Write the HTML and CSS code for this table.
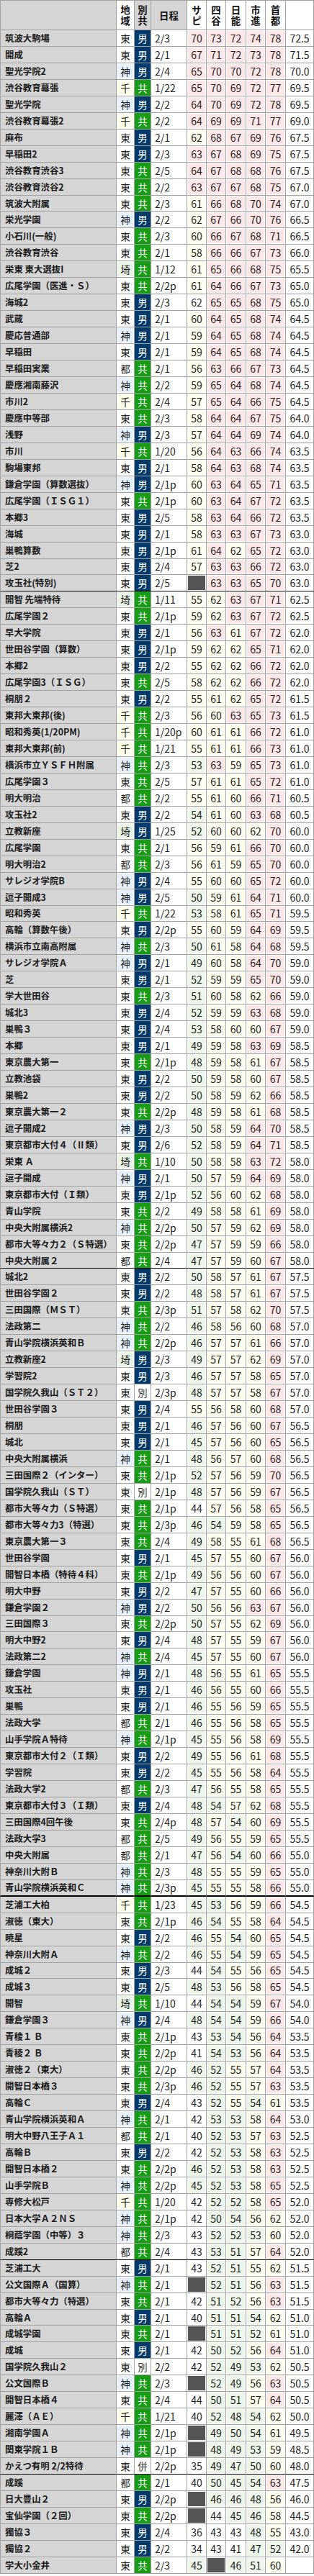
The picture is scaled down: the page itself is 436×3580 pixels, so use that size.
FILE: index.html
```html
<!DOCTYPE html>
<html lang="ja">
<head>
<meta charset="utf-8">
<title>偏差値一覧</title>
<link rel="stylesheet" href="styles.css">
</head>
<body>
<table class="rank">
<colgroup>
<col class="c-nm"><col class="c-r"><col class="c-g"><col class="c-d"><col class="c-s"><col class="c-s"><col class="c-s2"><col class="c-s"><col class="c-s2"><col class="c-av">
</colgroup>
<thead>
<tr>
<th class="hg"></th><th>地<br>域</th><th class="hg">別<br>共</th><th class="hg">日程</th><th>サ<br>ピ</th><th>四<br>谷</th><th>日<br>能</th><th>市<br>進</th><th>首<br>都</th><th></th>
</tr>
</thead>
<tbody>
<tr><td class="nm">筑波大駒場</td><td class="r">東</td><td class="m">男</td><td class="d">2/3</td><td class="p">70</td><td class="p">73</td><td class="p">72</td><td class="p">74</td><td class="p">78</td><td>72.5</td></tr>
<tr><td class="nm">開成</td><td class="r">東</td><td class="m">男</td><td class="d">2/1</td><td class="p">67</td><td class="p">71</td><td class="p">72</td><td class="p">73</td><td class="p">78</td><td>71.5</td></tr>
<tr><td class="nm">聖光学院2</td><td class="r kn">神</td><td class="m">男</td><td class="d">2/4</td><td class="p">65</td><td class="p">70</td><td class="p">70</td><td class="p">72</td><td class="p">78</td><td>70.0</td></tr>
<tr><td class="nm">渋谷教育幕張</td><td class="r cb">千</td><td class="k">共</td><td class="d">1/22</td><td class="p">65</td><td class="p">70</td><td class="p">69</td><td class="p">72</td><td class="p">77</td><td>69.5</td></tr>
<tr><td class="nm">聖光学院</td><td class="r kn">神</td><td class="m">男</td><td class="d">2/2</td><td class="p">64</td><td class="p">70</td><td class="p">69</td><td class="p">72</td><td class="p">78</td><td>69.5</td></tr>
<tr><td class="nm">渋谷教育幕張2</td><td class="r cb">千</td><td class="k">共</td><td class="d">2/2</td><td class="p">64</td><td class="p">69</td><td class="p">69</td><td class="p">71</td><td class="p">77</td><td>69.0</td></tr>
<tr><td class="nm">麻布</td><td class="r">東</td><td class="m">男</td><td class="d">2/1</td><td class="y">62</td><td class="p">68</td><td class="p">67</td><td class="p">69</td><td class="p">76</td><td>67.5</td></tr>
<tr><td class="nm">早稲田2</td><td class="r">東</td><td class="m">男</td><td class="d">2/3</td><td class="p">63</td><td class="p">67</td><td class="p">68</td><td class="p">69</td><td class="p">75</td><td>67.5</td></tr>
<tr><td class="nm">渋谷教育渋谷3</td><td class="r">東</td><td class="k">共</td><td class="d">2/5</td><td class="p">64</td><td class="p">67</td><td class="p">68</td><td class="p">68</td><td class="p">76</td><td>67.5</td></tr>
<tr><td class="nm">渋谷教育渋谷2</td><td class="r">東</td><td class="k">共</td><td class="d">2/2</td><td class="p">63</td><td class="p">67</td><td class="p">67</td><td class="p">68</td><td class="p">75</td><td>67.0</td></tr>
<tr><td class="nm">筑波大附属</td><td class="r">東</td><td class="k">共</td><td class="d">2/3</td><td class="y">61</td><td class="p">66</td><td class="p">68</td><td class="p">70</td><td class="p">74</td><td>67.0</td></tr>
<tr><td class="nm">栄光学園</td><td class="r kn">神</td><td class="m">男</td><td class="d">2/2</td><td class="y">62</td><td class="p">67</td><td class="p">66</td><td class="p">70</td><td class="p">76</td><td>66.5</td></tr>
<tr><td class="nm">小石川(一般)</td><td class="r">東</td><td class="k">共</td><td class="d">2/3</td><td class="y">60</td><td class="p">66</td><td class="p">67</td><td class="p">68</td><td class="p">71</td><td>66.5</td></tr>
<tr><td class="nm">渋谷教育渋谷</td><td class="r">東</td><td class="k">共</td><td class="d">2/1</td><td class="y">58</td><td class="p">66</td><td class="p">66</td><td class="p">67</td><td class="p">73</td><td>66.0</td></tr>
<tr><td class="nm">栄東 東大選抜I</td><td class="r st">埼</td><td class="k">共</td><td class="d">1/12</td><td class="y">61</td><td class="p">65</td><td class="p">66</td><td class="p">68</td><td class="p">75</td><td>65.5</td></tr>
<tr><td class="nm">広尾学園（医進・Ｓ）</td><td class="r">東</td><td class="k">共</td><td class="d">2/2p</td><td class="y">61</td><td class="p">64</td><td class="p">66</td><td class="p">67</td><td class="p">73</td><td>65.0</td></tr>
<tr><td class="nm">海城2</td><td class="r">東</td><td class="m">男</td><td class="d">2/3</td><td>62</td><td class="p">65</td><td class="p">65</td><td class="p">68</td><td class="p">75</td><td>65.0</td></tr>
<tr><td class="nm">武蔵</td><td class="r">東</td><td class="m">男</td><td class="d">2/1</td><td class="y">60</td><td class="p">64</td><td class="p">65</td><td class="p">68</td><td class="p">74</td><td>64.5</td></tr>
<tr><td class="nm">慶応普通部</td><td class="r kn">神</td><td class="m">男</td><td class="d">2/1</td><td class="y">59</td><td class="p">64</td><td class="p">65</td><td class="p">68</td><td class="p">74</td><td>64.5</td></tr>
<tr><td class="nm">早稲田</td><td class="r">東</td><td class="m">男</td><td class="d">2/1</td><td class="y">59</td><td class="p">64</td><td class="p">65</td><td class="p">68</td><td class="p">74</td><td>64.5</td></tr>
<tr><td class="nm">早稲田実業</td><td class="r">都</td><td class="k">共</td><td class="d">2/1</td><td class="y">56</td><td class="p">63</td><td class="p">66</td><td class="p">67</td><td class="p">73</td><td>64.5</td></tr>
<tr><td class="nm">慶應湘南藤沢</td><td class="r kn">神</td><td class="k">共</td><td class="d">2/2</td><td class="y">59</td><td class="p">65</td><td class="p">64</td><td class="p">68</td><td class="p">74</td><td>64.5</td></tr>
<tr><td class="nm">市川2</td><td class="r cb">千</td><td class="k">共</td><td class="d">2/4</td><td class="y">57</td><td class="p">65</td><td class="p">64</td><td class="p">66</td><td class="p">75</td><td>64.5</td></tr>
<tr><td class="nm">慶應中等部</td><td class="r">東</td><td class="k">共</td><td class="d">2/3</td><td class="y">58</td><td class="p">64</td><td class="p">64</td><td class="p">67</td><td class="p">75</td><td>64.0</td></tr>
<tr><td class="nm">浅野</td><td class="r kn">神</td><td class="m">男</td><td class="d">2/3</td><td class="y">57</td><td class="p">64</td><td class="p">64</td><td class="p">69</td><td class="p">74</td><td>64.0</td></tr>
<tr><td class="nm">市川</td><td class="r cb">千</td><td class="k">共</td><td class="d">1/20</td><td class="y">56</td><td class="p">64</td><td class="p">63</td><td class="p">66</td><td class="p">74</td><td>63.5</td></tr>
<tr><td class="nm">駒場東邦</td><td class="r">東</td><td class="m">男</td><td class="d">2/1</td><td class="y">58</td><td class="p">64</td><td class="p">63</td><td class="p">68</td><td class="p">74</td><td>63.5</td></tr>
<tr><td class="nm">鎌倉学園（算数選抜）</td><td class="r kn">神</td><td class="m">男</td><td class="d">2/1p</td><td class="y">60</td><td class="p">63</td><td class="p">64</td><td class="p">65</td><td class="p">71</td><td>63.5</td></tr>
<tr><td class="nm">広尾学園（ＩＳＧ１）</td><td class="r">東</td><td class="k">共</td><td class="d">2/1p</td><td class="y">60</td><td class="p">63</td><td class="p">64</td><td class="p">67</td><td class="p">72</td><td>63.5</td></tr>
<tr><td class="nm">本郷3</td><td class="r">東</td><td class="m">男</td><td class="d">2/5</td><td class="y">58</td><td class="p">63</td><td class="p">64</td><td class="p">66</td><td class="p">72</td><td>63.5</td></tr>
<tr><td class="nm">海城</td><td class="r">東</td><td class="m">男</td><td class="d">2/1</td><td class="y">58</td><td class="p">63</td><td class="p">63</td><td class="p">67</td><td class="p">73</td><td>63.0</td></tr>
<tr><td class="nm">巣鴨算数</td><td class="r">東</td><td class="m">男</td><td class="d">2/1p</td><td class="y">61</td><td class="p">64</td><td class="y">62</td><td class="p">65</td><td class="p">72</td><td>63.0</td></tr>
<tr><td class="nm">芝2</td><td class="r">東</td><td class="m">男</td><td class="d">2/4</td><td class="y">57</td><td class="p">63</td><td class="p">63</td><td class="p">66</td><td class="p">72</td><td>63.0</td></tr>
<tr class="sep"><td class="nm">攻玉社(特別)</td><td class="r">東</td><td class="m">男</td><td class="d">2/5</td><td class="x"></td><td class="p">63</td><td class="p">63</td><td class="p">65</td><td class="p">70</td><td>63.0</td></tr>
<tr><td class="nm">開智 先端特待</td><td class="r st">埼</td><td class="k">共</td><td class="d">1/11</td><td class="y">55</td><td class="y">62</td><td class="p">63</td><td class="p">67</td><td class="p">71</td><td>62.5</td></tr>
<tr><td class="nm">広尾学園２</td><td class="r">東</td><td class="k">共</td><td class="d">2/1p</td><td class="y">59</td><td class="y">62</td><td class="p">63</td><td class="p">67</td><td class="p">72</td><td>62.5</td></tr>
<tr><td class="nm">早大学院</td><td class="r">東</td><td class="m">男</td><td class="d">2/1</td><td class="y">56</td><td class="p">63</td><td class="y">61</td><td class="p">67</td><td class="p">72</td><td>62.0</td></tr>
<tr><td class="nm">世田谷学園（算数）</td><td class="r">東</td><td class="m">男</td><td class="d">2/1p</td><td class="y">59</td><td class="y">62</td><td class="y">62</td><td class="p">65</td><td class="p">71</td><td>62.0</td></tr>
<tr><td class="nm">本郷2</td><td class="r">東</td><td class="m">男</td><td class="d">2/2</td><td class="y">55</td><td class="y">62</td><td class="y">62</td><td class="p">66</td><td class="p">72</td><td>62.0</td></tr>
<tr><td class="nm">広尾学園3（ＩＳＧ）</td><td class="r">東</td><td class="k">共</td><td class="d">2/5</td><td class="y">58</td><td class="y">62</td><td class="y">62</td><td class="p">66</td><td class="p">72</td><td>62.0</td></tr>
<tr><td class="nm">桐朋２</td><td class="r">東</td><td class="m">男</td><td class="d">2/2</td><td class="y">55</td><td class="y">61</td><td class="y">62</td><td class="p">65</td><td class="p">72</td><td>61.5</td></tr>
<tr><td class="nm">東邦大東邦(後)</td><td class="r cb">千</td><td class="k">共</td><td class="d">2/3</td><td class="y">56</td><td class="y">60</td><td class="p">63</td><td class="p">65</td><td class="p">73</td><td>61.5</td></tr>
<tr><td class="nm">昭和秀英(1/20PM)</td><td class="r cb">千</td><td class="k">共</td><td class="d">1/20p</td><td class="y">60</td><td class="y">61</td><td class="y">61</td><td class="p">66</td><td class="p">72</td><td>61.0</td></tr>
<tr><td class="nm">東邦大東邦(前)</td><td class="r cb">千</td><td class="k">共</td><td class="d">1/21</td><td class="y">55</td><td class="y">61</td><td class="y">61</td><td class="p">66</td><td class="p">73</td><td>61.0</td></tr>
<tr><td class="nm">横浜市立ＹＳＦＨ附属</td><td class="r kn">神</td><td class="k">共</td><td class="d">2/3</td><td class="g">53</td><td class="p">63</td><td class="y">59</td><td class="p">65</td><td class="p">73</td><td>61.0</td></tr>
<tr><td class="nm">広尾学園３</td><td class="r">東</td><td class="k">共</td><td class="d">2/5</td><td class="y">57</td><td class="y">61</td><td class="y">61</td><td class="p">65</td><td class="p">72</td><td>61.0</td></tr>
<tr><td class="nm">明大明治</td><td class="r">都</td><td class="k">共</td><td class="d">2/2</td><td class="y">55</td><td class="y">61</td><td class="y">60</td><td class="p">66</td><td class="p">71</td><td>60.5</td></tr>
<tr><td class="nm">攻玉社2</td><td class="r">東</td><td class="m">男</td><td class="d">2/2</td><td class="g">54</td><td class="y">61</td><td class="y">60</td><td class="p">63</td><td class="p">68</td><td>60.5</td></tr>
<tr><td class="nm">立教新座</td><td class="r st">埼</td><td class="m">男</td><td class="d">1/25</td><td class="g">52</td><td class="y">60</td><td class="y">60</td><td class="y">62</td><td class="p">70</td><td>60.0</td></tr>
<tr><td class="nm">広尾学園</td><td class="r">東</td><td class="k">共</td><td class="d">2/1</td><td class="y">56</td><td class="y">59</td><td class="y">61</td><td class="p">66</td><td class="p">70</td><td>60.0</td></tr>
<tr><td class="nm">明大明治2</td><td class="r">都</td><td class="k">共</td><td class="d">2/3</td><td class="y">56</td><td class="y">61</td><td class="y">59</td><td class="p">65</td><td class="p">70</td><td>60.0</td></tr>
<tr><td class="nm">サレジオ学院B</td><td class="r kn">神</td><td class="m">男</td><td class="d">2/4</td><td class="y">55</td><td class="y">60</td><td class="y">60</td><td class="p">65</td><td class="p">72</td><td>60.0</td></tr>
<tr><td class="nm">逗子開成3</td><td class="r kn">神</td><td class="m">男</td><td class="d">2/5</td><td class="g">50</td><td class="y">59</td><td class="y">61</td><td class="p">64</td><td class="p">71</td><td>60.0</td></tr>
<tr><td class="nm">昭和秀英</td><td class="r cb">千</td><td class="k">共</td><td class="d">1/22</td><td class="g">53</td><td class="y">58</td><td class="y">61</td><td class="p">65</td><td class="p">71</td><td>59.5</td></tr>
<tr><td class="nm">高輪（算数午後）</td><td class="r">東</td><td class="m">男</td><td class="d">2/2p</td><td class="y">55</td><td class="y">60</td><td class="y">59</td><td class="p">64</td><td class="p">69</td><td>59.5</td></tr>
<tr><td class="nm">横浜市立南高附属</td><td class="r kn">神</td><td class="k">共</td><td class="d">2/3</td><td class="g">50</td><td class="y">61</td><td class="y">58</td><td class="p">64</td><td class="p">68</td><td>59.5</td></tr>
<tr><td class="nm">サレジオ学院Ａ</td><td class="r kn">神</td><td class="m">男</td><td class="d">2/1</td><td class="g">49</td><td class="y">60</td><td class="y">58</td><td class="p">64</td><td class="p">70</td><td>59.0</td></tr>
<tr><td class="nm">芝</td><td class="r">東</td><td class="m">男</td><td class="d">2/1</td><td class="g">52</td><td class="y">59</td><td class="y">59</td><td class="p">65</td><td class="p">70</td><td>59.0</td></tr>
<tr><td class="nm">学大世田谷</td><td class="r">東</td><td class="k">共</td><td class="d">2/3</td><td class="g">51</td><td class="y">60</td><td class="y">58</td><td class="y">62</td><td class="p">66</td><td>59.0</td></tr>
<tr><td class="nm">城北3</td><td class="r">東</td><td class="m">男</td><td class="d">2/4</td><td class="g">52</td><td class="y">59</td><td class="y">59</td><td class="p">63</td><td class="p">68</td><td>59.0</td></tr>
<tr><td class="nm">巣鴨３</td><td class="r">東</td><td class="m">男</td><td class="d">2/4</td><td class="g">53</td><td class="y">58</td><td class="y">60</td><td class="y">60</td><td class="p">67</td><td>59.0</td></tr>
<tr><td class="nm">本郷</td><td class="r">東</td><td class="m">男</td><td class="d">2/1</td><td class="g">49</td><td class="y">59</td><td class="y">58</td><td class="p">63</td><td class="p">69</td><td>58.5</td></tr>
<tr><td class="nm">東京農大第一</td><td class="r">東</td><td class="k">共</td><td class="d">2/1p</td><td class="g">48</td><td class="y">59</td><td class="y">58</td><td class="y">61</td><td class="p">67</td><td>58.5</td></tr>
<tr><td class="nm">立教池袋</td><td class="r">東</td><td class="m">男</td><td class="d">2/2</td><td class="g">50</td><td class="y">59</td><td class="y">58</td><td class="y">60</td><td class="p">67</td><td>58.5</td></tr>
<tr><td class="nm">巣鴨2</td><td class="r">東</td><td class="m">男</td><td class="d">2/2</td><td class="g">50</td><td class="y">58</td><td class="y">59</td><td class="y">62</td><td class="p">66</td><td>58.5</td></tr>
<tr><td class="nm">東京農大第一２</td><td class="r">東</td><td class="k">共</td><td class="d">2/2p</td><td class="g">48</td><td class="y">59</td><td class="y">58</td><td class="y">61</td><td class="p">68</td><td>58.5</td></tr>
<tr><td class="nm">逗子開成2</td><td class="r kn">神</td><td class="m">男</td><td class="d">2/3</td><td class="g">50</td><td class="y">58</td><td class="y">59</td><td class="p">64</td><td class="p">70</td><td>58.5</td></tr>
<tr><td class="nm">東京都市大付４（Ⅱ類）</td><td class="r">東</td><td class="m">男</td><td class="d">2/6</td><td class="g">52</td><td class="y">58</td><td class="y">59</td><td class="p">64</td><td class="p">71</td><td>58.5</td></tr>
<tr><td class="nm">栄東 Ａ</td><td class="r st">埼</td><td class="k">共</td><td class="d">1/10</td><td class="g">50</td><td class="y">58</td><td class="y">58</td><td class="p">63</td><td class="p">72</td><td>58.0</td></tr>
<tr><td class="nm">逗子開成</td><td class="r kn">神</td><td class="m">男</td><td class="d">2/1</td><td class="g">50</td><td class="y">57</td><td class="y">59</td><td class="p">64</td><td class="p">69</td><td>58.0</td></tr>
<tr><td class="nm">東京都市大付（Ｉ類）</td><td class="r">東</td><td class="m">男</td><td class="d">2/1p</td><td class="g">52</td><td class="y">56</td><td class="y">60</td><td class="y">62</td><td class="p">68</td><td>58.0</td></tr>
<tr><td class="nm">青山学院</td><td class="r">東</td><td class="k">共</td><td class="d">2/2</td><td class="g">49</td><td class="y">58</td><td class="y">58</td><td class="y">61</td><td class="p">69</td><td>58.0</td></tr>
<tr><td class="nm">中央大附属横浜2</td><td class="r kn">神</td><td class="k">共</td><td class="d">2/2p</td><td class="g">50</td><td class="y">57</td><td class="y">59</td><td class="y">62</td><td class="p">69</td><td>58.0</td></tr>
<tr><td class="nm">都市大等々力２（Ｓ特選）</td><td class="r">東</td><td class="k">共</td><td class="d">2/2p</td><td class="g">47</td><td class="y">57</td><td class="y">59</td><td class="y">59</td><td class="p">66</td><td>58.0</td></tr>
<tr class="sep"><td class="nm">中央大附属２</td><td class="r">都</td><td class="k">共</td><td class="d">2/4</td><td class="g">47</td><td class="y">57</td><td class="y">59</td><td class="y">60</td><td class="p">67</td><td>58.0</td></tr>
<tr><td class="nm">城北2</td><td class="r">東</td><td class="m">男</td><td class="d">2/2</td><td class="g">50</td><td class="y">58</td><td class="y">57</td><td class="y">61</td><td class="p">67</td><td>57.5</td></tr>
<tr><td class="nm">世田谷学園２</td><td class="r">東</td><td class="m">男</td><td class="d">2/2</td><td class="g">48</td><td class="y">58</td><td class="y">57</td><td class="y">61</td><td class="p">67</td><td>57.5</td></tr>
<tr><td class="nm">三田国際（ＭＳＴ）</td><td class="r">東</td><td class="k">共</td><td class="d">2/3p</td><td class="g">51</td><td class="y">57</td><td class="y">58</td><td class="y">62</td><td class="p">70</td><td>57.5</td></tr>
<tr><td class="nm">法政第二</td><td class="r kn">神</td><td class="k">共</td><td class="d">2/2</td><td class="g">46</td><td class="y">58</td><td class="y">56</td><td class="y">60</td><td class="p">68</td><td>57.0</td></tr>
<tr><td class="nm">青山学院横浜英和Ｂ</td><td class="r kn">神</td><td class="k">共</td><td class="d">2/2p</td><td class="g">46</td><td class="y">57</td><td class="y">57</td><td class="y">61</td><td class="p">66</td><td>57.0</td></tr>
<tr><td class="nm">立教新座2</td><td class="r st">埼</td><td class="m">男</td><td class="d">2/3</td><td class="g">49</td><td class="y">57</td><td class="y">57</td><td class="y">62</td><td class="p">69</td><td>57.0</td></tr>
<tr><td class="nm">学習院2</td><td class="r">東</td><td class="m">男</td><td class="d">2/3</td><td class="g">46</td><td class="y">57</td><td class="y">57</td><td class="y">58</td><td class="p">65</td><td>57.0</td></tr>
<tr><td class="nm">国学院久我山（ＳＴ２）</td><td class="r">東</td><td class="b">別</td><td class="d">2/3p</td><td class="g">48</td><td class="y">57</td><td class="y">57</td><td class="y">58</td><td class="p">67</td><td>57.0</td></tr>
<tr><td class="nm">世田谷学園３</td><td class="r">東</td><td class="m">男</td><td class="d">2/4</td><td class="y">55</td><td class="y">56</td><td class="y">58</td><td class="y">60</td><td class="p">68</td><td>57.0</td></tr>
<tr><td class="nm">桐朋</td><td class="r">東</td><td class="m">男</td><td class="d">2/1</td><td class="g">46</td><td class="y">57</td><td class="y">56</td><td class="y">60</td><td class="p">67</td><td>56.5</td></tr>
<tr><td class="nm">城北</td><td class="r">東</td><td class="m">男</td><td class="d">2/1</td><td class="g">45</td><td class="y">57</td><td class="y">56</td><td class="y">60</td><td class="p">65</td><td>56.5</td></tr>
<tr><td class="nm">中央大附属横浜</td><td class="r kn">神</td><td class="k">共</td><td class="d">2/1</td><td class="g">48</td><td class="y">56</td><td class="y">57</td><td class="y">60</td><td class="p">68</td><td>56.5</td></tr>
<tr><td class="nm">三田国際２（インター）</td><td class="r">東</td><td class="k">共</td><td class="d">2/1p</td><td class="g">52</td><td class="y">57</td><td class="y">56</td><td class="y">59</td><td class="p">70</td><td>56.5</td></tr>
<tr><td class="nm">国学院久我山（ＳＴ）</td><td class="r">東</td><td class="b">別</td><td class="d">2/1p</td><td class="g">48</td><td class="y">57</td><td class="y">56</td><td class="y">59</td><td class="p">67</td><td>56.5</td></tr>
<tr><td class="nm">都市大等々力（Ｓ特選）</td><td class="r">東</td><td class="k">共</td><td class="d">2/1p</td><td>44</td><td class="y">57</td><td class="y">56</td><td class="y">58</td><td class="p">65</td><td>56.5</td></tr>
<tr><td class="nm">都市大等々力3（特選）</td><td class="r">東</td><td class="k">共</td><td class="d">2/3p</td><td class="g">46</td><td class="g">54</td><td class="y">59</td><td class="y">58</td><td class="p">65</td><td>56.5</td></tr>
<tr><td class="nm">東京農大第一３</td><td class="r">東</td><td class="k">共</td><td class="d">2/4</td><td class="g">49</td><td class="y">58</td><td class="y">55</td><td class="y">61</td><td class="p">68</td><td>56.5</td></tr>
<tr><td class="nm">世田谷学園</td><td class="r">東</td><td class="m">男</td><td class="d">2/1</td><td class="g">45</td><td class="y">57</td><td class="y">55</td><td class="y">60</td><td class="p">67</td><td>56.0</td></tr>
<tr><td class="nm">開智日本橋（特待４科）</td><td class="r">東</td><td class="k">共</td><td class="d">2/1p</td><td class="g">49</td><td class="y">56</td><td class="y">56</td><td class="y">60</td><td class="p">67</td><td>56.0</td></tr>
<tr><td class="nm">明大中野</td><td class="r">東</td><td class="m">男</td><td class="d">2/2</td><td class="g">47</td><td class="y">57</td><td class="y">55</td><td class="y">60</td><td class="p">66</td><td>56.0</td></tr>
<tr><td class="nm">鎌倉学園２</td><td class="r kn">神</td><td class="m">男</td><td class="d">2/2</td><td class="g">50</td><td class="y">56</td><td class="y">56</td><td class="p">63</td><td class="p">67</td><td>56.0</td></tr>
<tr><td class="nm">三田国際３</td><td class="r">東</td><td class="k">共</td><td class="d">2/2p</td><td class="g">50</td><td class="y">57</td><td class="y">55</td><td class="y">62</td><td class="p">69</td><td>56.0</td></tr>
<tr><td class="nm">明大中野2</td><td class="r">東</td><td class="m">男</td><td class="d">2/4</td><td class="g">48</td><td class="y">57</td><td class="y">55</td><td class="y">59</td><td class="p">67</td><td>56.0</td></tr>
<tr><td class="nm">法政第二2</td><td class="r kn">神</td><td class="k">共</td><td class="d">2/4</td><td class="g">45</td><td class="y">57</td><td class="y">55</td><td class="y">60</td><td class="p">67</td><td>56.0</td></tr>
<tr><td class="nm">鎌倉学園</td><td class="r kn">神</td><td class="m">男</td><td class="d">2/1</td><td class="g">48</td><td class="y">56</td><td class="y">55</td><td class="y">61</td><td class="p">65</td><td>55.5</td></tr>
<tr><td class="nm">攻玉社</td><td class="r">東</td><td class="m">男</td><td class="d">2/1</td><td class="g">46</td><td class="y">56</td><td class="y">55</td><td class="y">60</td><td class="p">66</td><td>55.5</td></tr>
<tr><td class="nm">巣鴨</td><td class="r">東</td><td class="m">男</td><td class="d">2/1</td><td class="g">46</td><td class="y">55</td><td class="y">56</td><td class="y">59</td><td class="p">65</td><td>55.5</td></tr>
<tr><td class="nm">法政大学</td><td class="r">都</td><td class="k">共</td><td class="d">2/1</td><td class="g">46</td><td class="y">55</td><td class="y">56</td><td class="y">58</td><td class="p">65</td><td>55.5</td></tr>
<tr><td class="nm">山手学院Ａ特待</td><td class="r kn">神</td><td class="k">共</td><td class="d">2/1p</td><td class="g">45</td><td class="y">55</td><td class="y">56</td><td class="y">58</td><td class="p">69</td><td>55.5</td></tr>
<tr><td class="nm">東京都市大付２（Ｉ類）</td><td class="r">東</td><td class="m">男</td><td class="d">2/2</td><td class="g">49</td><td class="y">55</td><td class="y">56</td><td class="y">61</td><td class="p">68</td><td>55.5</td></tr>
<tr><td class="nm">学習院</td><td class="r">東</td><td class="m">男</td><td class="d">2/2</td><td class="g">45</td><td class="y">55</td><td class="y">56</td><td class="y">58</td><td class="p">64</td><td>55.5</td></tr>
<tr><td class="nm">法政大学2</td><td class="r">都</td><td class="k">共</td><td class="d">2/3</td><td class="g">47</td><td class="y">56</td><td class="y">55</td><td class="y">58</td><td class="p">65</td><td>55.5</td></tr>
<tr><td class="nm">東京都市大付３（Ｉ類）</td><td class="r">東</td><td class="m">男</td><td class="d">2/4</td><td class="g">48</td><td class="g">54</td><td class="y">57</td><td class="y">62</td><td class="p">68</td><td>55.5</td></tr>
<tr><td class="nm">三田国際4回午後</td><td class="r">東</td><td class="k">共</td><td class="d">2/4p</td><td class="g">48</td><td class="y">57</td><td class="g">54</td><td class="y">60</td><td class="p">69</td><td>55.5</td></tr>
<tr><td class="nm">法政大学3</td><td class="r">都</td><td class="k">共</td><td class="d">2/5</td><td class="g">49</td><td class="y">56</td><td class="y">55</td><td class="y">59</td><td class="p">65</td><td>55.5</td></tr>
<tr><td class="nm">中央大附属</td><td class="r">都</td><td class="k">共</td><td class="d">2/1</td><td class="g">47</td><td class="y">56</td><td class="g">54</td><td class="y">60</td><td class="p">66</td><td>55.0</td></tr>
<tr><td class="nm">神奈川大附Ｂ</td><td class="r kn">神</td><td class="k">共</td><td class="d">2/3</td><td class="g">48</td><td class="y">55</td><td class="y">55</td><td class="y">59</td><td class="p">65</td><td>55.0</td></tr>
<tr class="sep2"><td class="nm">青山学院横浜英和Ｃ</td><td class="r kn">神</td><td class="k">共</td><td class="d">2/3p</td><td class="g">45</td><td class="y">55</td><td class="y">55</td><td class="y">58</td><td class="p">66</td><td>55.0</td></tr>
<tr><td class="nm">芝浦工大柏</td><td class="r cb">千</td><td class="k">共</td><td class="d">1/23</td><td class="g">45</td><td class="g">53</td><td class="y">56</td><td class="y">59</td><td class="p">66</td><td>54.5</td></tr>
<tr><td class="nm">淑徳（東大）</td><td class="r">東</td><td class="k">共</td><td class="d">2/1p</td><td class="g">46</td><td class="g">54</td><td class="y">55</td><td class="y">58</td><td class="p">64</td><td>54.5</td></tr>
<tr><td class="nm">暁星</td><td class="r">東</td><td class="m">男</td><td class="d">2/2</td><td class="g">46</td><td class="y">55</td><td class="g">54</td><td class="y">60</td><td class="p">65</td><td>54.5</td></tr>
<tr><td class="nm">神奈川大附Ａ</td><td class="r kn">神</td><td class="k">共</td><td class="d">2/2</td><td class="g">46</td><td class="y">55</td><td class="g">54</td><td class="y">59</td><td class="p">65</td><td>54.5</td></tr>
<tr><td class="nm">成城２</td><td class="r">東</td><td class="m">男</td><td class="d">2/3</td><td>44</td><td class="g">54</td><td class="y">55</td><td class="y">56</td><td class="p">65</td><td>54.5</td></tr>
<tr><td class="nm">成城３</td><td class="r">東</td><td class="m">男</td><td class="d">2/5</td><td class="g">48</td><td class="g">53</td><td class="y">56</td><td class="y">58</td><td class="p">65</td><td>54.5</td></tr>
<tr><td class="nm">開智</td><td class="r st">埼</td><td class="k">共</td><td class="d">1/10</td><td>44</td><td class="g">54</td><td class="g">54</td><td class="y">59</td><td class="p">67</td><td>54.0</td></tr>
<tr><td class="nm">鎌倉学園３</td><td class="r kn">神</td><td class="m">男</td><td class="d">2/4</td><td class="g">48</td><td class="g">54</td><td class="g">54</td><td class="y">59</td><td class="p">66</td><td>54.0</td></tr>
<tr><td class="nm">青稜１ Ｂ</td><td class="r">東</td><td class="k">共</td><td class="d">2/1p</td><td>43</td><td class="g">53</td><td class="g">54</td><td class="y">56</td><td class="p">64</td><td>53.5</td></tr>
<tr><td class="nm">青稜２ Ｂ</td><td class="r">東</td><td class="k">共</td><td class="d">2/2p</td><td>41</td><td class="g">54</td><td class="g">53</td><td class="y">56</td><td class="p">64</td><td>53.5</td></tr>
<tr><td class="nm">淑徳２（東大）</td><td class="r">東</td><td class="k">共</td><td class="d">2/2p</td><td class="g">46</td><td class="g">52</td><td class="y">55</td><td class="y">57</td><td class="p">64</td><td>53.5</td></tr>
<tr><td class="nm">開智日本橋３</td><td class="r">東</td><td class="k">共</td><td class="d">2/3p</td><td class="g">46</td><td class="g">52</td><td class="y">55</td><td class="y">57</td><td class="p">63</td><td>53.5</td></tr>
<tr><td class="nm">高輪Ｃ</td><td class="r">東</td><td class="m">男</td><td class="d">2/4</td><td>43</td><td class="g">52</td><td class="y">55</td><td class="g">54</td><td class="y">61</td><td>53.5</td></tr>
<tr><td class="nm">青山学院横浜英和Ａ</td><td class="r kn">神</td><td class="k">共</td><td class="d">2/1</td><td>42</td><td class="g">53</td><td class="g">53</td><td class="y">58</td><td class="p">64</td><td>53.0</td></tr>
<tr><td class="nm">明大中野八王子Ａ１</td><td class="r">都</td><td class="k">共</td><td class="d">2/1</td><td>40</td><td class="g">52</td><td class="g">53</td><td class="y">57</td><td class="p">63</td><td>52.5</td></tr>
<tr><td class="nm">高輪Ｂ</td><td class="r">東</td><td class="m">男</td><td class="d">2/2</td><td>42</td><td class="g">52</td><td class="g">53</td><td class="y">58</td><td class="p">63</td><td>52.5</td></tr>
<tr><td class="nm">開智日本橋２</td><td class="r">東</td><td class="k">共</td><td class="d">2/2p</td><td class="g">46</td><td class="g">52</td><td class="g">53</td><td class="y">58</td><td class="p">63</td><td>52.5</td></tr>
<tr><td class="nm">山手学院Ｂ</td><td class="r kn">神</td><td class="k">共</td><td class="d">2/2p</td><td class="g">45</td><td class="g">52</td><td class="g">53</td><td class="y">58</td><td class="p">65</td><td>52.5</td></tr>
<tr><td class="nm">専修大松戸</td><td class="r cb">千</td><td class="k">共</td><td class="d">1/20</td><td>42</td><td class="g">52</td><td class="g">52</td><td class="y">58</td><td class="p">65</td><td>52.0</td></tr>
<tr><td class="nm">日本大学Ａ２ＮＳ</td><td class="r kn">神</td><td class="k">共</td><td class="d">2/1p</td><td>42</td><td class="g">50</td><td class="g">54</td><td class="y">56</td><td class="y">62</td><td>52.0</td></tr>
<tr><td class="nm">桐蔭学園（中等）３</td><td class="r kn">神</td><td class="k">共</td><td class="d">2/3</td><td>43</td><td class="g">52</td><td class="g">52</td><td class="g">53</td><td class="y">60</td><td>52.0</td></tr>
<tr class="sep"><td class="nm">成蹊2</td><td class="r">都</td><td class="k">共</td><td class="d">2/4</td><td>43</td><td class="g">53</td><td class="g">51</td><td class="y">57</td><td class="p">64</td><td>52.0</td></tr>
<tr><td class="nm">芝浦工大</td><td class="r">東</td><td class="m">男</td><td class="d">2/1</td><td>43</td><td class="g">52</td><td class="g">51</td><td class="y">55</td><td class="y">62</td><td>51.5</td></tr>
<tr><td class="nm">公文国際Ａ（国算）</td><td class="r kn">神</td><td class="k">共</td><td class="d">2/1</td><td class="x"></td><td class="g">52</td><td class="g">51</td><td class="y">56</td><td class="p">63</td><td>51.5</td></tr>
<tr><td class="nm">都市大等々力（特選）</td><td class="r">東</td><td class="k">共</td><td class="d">2/1</td><td>42</td><td class="g">51</td><td class="g">52</td><td class="y">56</td><td class="p">63</td><td>51.5</td></tr>
<tr><td class="nm">高輪Ａ</td><td class="r">東</td><td class="m">男</td><td class="d">2/1</td><td>40</td><td class="g">51</td><td class="g">51</td><td class="g">54</td><td class="y">62</td><td>51.0</td></tr>
<tr><td class="nm">成城学園</td><td class="r">東</td><td class="k">共</td><td class="d">2/1</td><td class="x"></td><td class="g">51</td><td class="g">51</td><td class="g">52</td><td class="y">61</td><td>51.0</td></tr>
<tr><td class="nm">成城</td><td class="r">東</td><td class="m">男</td><td class="d">2/1</td><td>42</td><td class="g">50</td><td class="g">52</td><td class="y">56</td><td class="p">64</td><td>51.0</td></tr>
<tr><td class="nm">国学院久我山２</td><td class="r">東</td><td class="b">別</td><td class="d">2/2</td><td>42</td><td class="g">52</td><td class="g">49</td><td class="g">53</td><td class="y">62</td><td>50.5</td></tr>
<tr><td class="nm">公文国際Ｂ</td><td class="r kn">神</td><td class="k">共</td><td class="d">2/3</td><td class="x"></td><td class="g">52</td><td class="g">49</td><td class="y">56</td><td class="p">63</td><td>50.5</td></tr>
<tr><td class="nm">開智日本橋４</td><td class="r">東</td><td class="k">共</td><td class="d">2/4</td><td>44</td><td class="g">50</td><td class="g">51</td><td class="y">57</td><td class="p">64</td><td>50.5</td></tr>
<tr><td class="nm">麗澤（ＡＥ）</td><td class="r cb">千</td><td class="k">共</td><td class="d">1/21</td><td>40</td><td class="g">52</td><td class="g">48</td><td class="g">54</td><td class="y">62</td><td>50.0</td></tr>
<tr><td class="nm">湘南学園Ａ</td><td class="r kn">神</td><td class="k">共</td><td class="d">2/1p</td><td class="x"></td><td class="g">49</td><td class="g">50</td><td class="g">54</td><td class="y">61</td><td>49.5</td></tr>
<tr><td class="nm">関東学院１Ｂ</td><td class="r kn">神</td><td class="k">共</td><td class="d">2/1p</td><td class="x"></td><td class="g">48</td><td class="g">49</td><td class="g">53</td><td class="y">59</td><td>48.5</td></tr>
<tr class="sep"><td class="nm">かえつ有明 2/2特待</td><td class="r">東</td><td class="b">併</td><td class="d">2/2p</td><td>35</td><td class="g">49</td><td class="g">47</td><td class="g">50</td><td class="y">60</td><td>48.0</td></tr>
<tr><td class="nm">成蹊</td><td class="r">都</td><td class="k">共</td><td class="d">2/1</td><td>40</td><td class="g">50</td><td class="g">45</td><td class="g">54</td><td class="p">63</td><td>47.5</td></tr>
<tr><td class="nm">日大豊山２</td><td class="r">東</td><td class="m">男</td><td class="d">2/2p</td><td class="x"></td><td class="g">46</td><td class="g">46</td><td class="g">48</td><td class="y">56</td><td>46.0</td></tr>
<tr><td class="nm">宝仙学園（２回）</td><td class="r">東</td><td class="k">共</td><td class="d">2/2p</td><td class="x"></td><td>44</td><td class="g">45</td><td class="g">46</td><td class="y">58</td><td>44.5</td></tr>
<tr><td class="nm">獨協３</td><td class="r">東</td><td class="m">男</td><td class="d">2/4</td><td>36</td><td>43</td><td>43</td><td class="g">48</td><td class="y">55</td><td>43.0</td></tr>
<tr><td class="nm">獨協２</td><td class="r">東</td><td class="m">男</td><td class="d">2/2</td><td>34</td><td>43</td><td>41</td><td class="g">47</td><td class="g">52</td><td>42.0</td></tr>
<tr><td class="nm">学大小金井</td><td class="r">東</td><td class="k">共</td><td class="d">2/3</td><td class="g">45</td><td class="x"></td><td class="g">46</td><td class="g">51</td><td class="y">60</td><td></td></tr>
</tbody>
</table>
</body>
</html>
```
FILE: styles.css
```css
html, body {
  margin: 0;
  padding: 0;
  background: #fff;
}

body {
  font-family: "Noto Sans CJK JP", "Noto Sans", "Liberation Sans", sans-serif;
  color: #1e1e1e;
}

.rank {
  width: 436px;
  table-layout: fixed;
  border-collapse: separate;
  border-spacing: 0;
}

.c-nm { width: 162px; }
.c-r { width: 25px; }
.c-g { width: 23px; }
.c-d { width: 50px; }
.c-s { width: 27px; }
.c-s2 { width: 28px; }
.c-av { width: 39px; }

.rank th,
.rank td {
  box-sizing: border-box;
  padding: 0;
  border-right: 1px solid #a2a2a2;
  border-bottom: 1px solid #a2a2a2;
  text-align: center;
  vertical-align: middle;
  white-space: nowrap;
  overflow: hidden;
}

.rank tr > :first-child {
  border-left: 1px solid #a2a2a2;
}

/* header */
.rank thead th {
  height: 42px;
  border-top: 1px solid #a2a2a2;
  font-size: 13.4px;
  line-height: 15px;
  font-weight: bold;
  color: #111;
  background: #fff;
}

.rank thead th.hg {
  background: #d5d5d5;
}

/* body cells */
.rank tbody td {
  height: 22.96px;
  font-size: 14px;
  line-height: 16px;
}

.rank td.nm {
  text-align: left;
  padding-left: 6px;
  font-size: 12.4px;
  font-weight: bold;
  color: #1a1a1a;
  background: #d5d5d5;
}

.rank td.r {
  font-size: 13.6px;
}

.rank td.kn { background: #e5f1fc; box-shadow: inset 0 0 0 1px #fff; }
.rank td.cb { background: #fefdea; box-shadow: inset 0 0 0 1px #fff; }
.rank td.st { background: #e9f5e6; box-shadow: inset 0 0 0 1px #fff; }

.rank td.m {
  background: #033a6b;
  color: #fff;
  font-size: 13.4px;
}

.rank td.k {
  background: #169c15;
  color: #fff;
  font-size: 13.4px;
}

.rank td.b {
  color: #333;
  font-size: 13.4px;
}

.rank td.d {
  text-align: left;
  padding-left: 5px;
}

.rank td.p { background: #fde7e7; box-shadow: inset 0 0 0 1px #fff; }
.rank td.y { background: #fefdee; box-shadow: inset 0 0 0 1px #fff; }
.rank td.g { background: #ecf7e9; box-shadow: inset 0 0 0 1px #fff; }
.rank td.x { background: #555; box-shadow: inset 0 0 0 1px #fff; }

/* separator lines between bands */
.rank tr.sep > td {
  border-bottom-color: #000;
}

.rank tr.sep2 > td {
  border-bottom: 2px solid #000;
}
```
